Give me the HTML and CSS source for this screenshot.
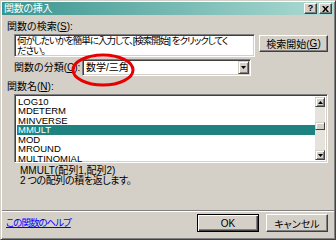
FILE: index.html
```html
<!DOCTYPE html>
<html lang="ja">
<head>
<meta charset="utf-8">
<link rel="stylesheet" href="styles.css">
</head>
<body>
<div class="window">
  <div class="titlebar">
    <span class="title">関数の挿入</span>
    <div class="tbtns">
      <span class="tbtn q">?</span>
      <span class="tbtn x"><svg width="7" height="6" viewBox="0 0 7 6"><path d="M0 0h2l1.5 2L5 0h2L4.5 3 7 6H5L3.5 4 2 6H0l2.5-3z" fill="#000"/></svg></span>
    </div>
  </div>
  <div class="content">
    <div class="label l1">関数の検索(<u>S</u>):</div>
    <div class="search-row">
      <div class="searchbox">何がしたいかを簡単に入力して、[検索開始] をクリックしてく<br>ださい。</div>
      <div class="btn search-btn">検索開始(<u>G</u>)</div>
    </div>
    <div class="cat-row">
      <span class="label">関数の分類(<u>C</u>):</span>
      <div class="combo">
        <span class="combo-text">数学/三角</span>
        <span class="drop"><svg width="5" height="3" viewBox="0 0 5 3"><path d="M0 0h5L2.5 3z" fill="#000"/></svg></span>
      </div>
    </div>
    <div class="label l3">関数名(<u>N</u>):</div>
    <div class="listbox">
      <ul class="items">
        <li>LOG10</li>
        <li>MDETERM</li>
        <li>MINVERSE</li>
        <li class="sel">MMULT</li>
        <li>MOD</li>
        <li>MROUND</li>
        <li>MULTINOMIAL</li>
      </ul>
      <div class="scrollbar">
        <span class="sbtn"><svg width="5" height="3" viewBox="0 0 5 3"><path d="M0 3h5L2.5 0z" fill="#000"/></svg></span>
        <div class="track"><span class="thumb"></span></div>
        <span class="sbtn"><svg width="5" height="3" viewBox="0 0 5 3"><path d="M0 0h5L2.5 3z" fill="#000"/></svg></span>
      </div>
    </div>
    <div class="desc">
      <div>MMULT(配列1,配列2)</div>
      <div class="desc2">2 つの配列の積を返します。</div>
    </div>
  </div>
  <div class="sep"></div>
  <div class="bottom">
    <a class="help">この関数のヘルプ</a>
    <div class="btns">
      <div class="btn ok">OK</div>
      <div class="btn cancel">キャンセル</div>
    </div>
  </div>
  <svg class="annot" width="70" height="40" viewBox="0 0 70 40"><ellipse cx="34" cy="19" rx="30" ry="15" fill="none" stroke="#e80000" stroke-width="3"/></svg>
</div>
</body>
</html>
```
FILE: styles.css
```css
* { box-sizing: border-box; }
html, body { margin: 0; padding: 0; }
body {
  width: 336px;
  height: 240px;
  overflow: hidden;
  font-family: "Liberation Sans", "Noto Sans CJK JP", sans-serif;
  font-size: 10px;
  font-feature-settings: "palt";
  color: #000;
}
u { text-decoration: underline; text-underline-offset: 1px; }

.window {
  position: relative;
  width: 336px;
  height: 240px;
  background: #d4d0c8;
  border: 1px solid;
  border-color: #d4d0c8 #404040 #404040 #d4d0c8;
  box-shadow: inset 1px 1px #fff, inset -1px -1px #808080;
  padding: 1px;
  display: flex;
  flex-direction: column;
}

.titlebar {
  height: 13px;
  background: linear-gradient(to right, #3a958f, #aedcd4);
  display: flex;
  align-items: center;
  justify-content: space-between;
  padding: 0 2px 0 2px;
}
.title { color: #fff; line-height: 12px; letter-spacing: -0.3px; }
.tbtns { display: flex; gap: 1px; }
.tbtn {
  width: 13px;
  height: 11px;
  background: #d4d0c8;
  border: 1px solid;
  border-color: #fff #404040 #404040 #fff;
  box-shadow: inset -1px -1px #808080;
  display: flex;
  align-items: center;
  justify-content: center;
  font-weight: bold;
  font-size: 9px;
  line-height: 9px;
}
.tbtn.x { margin-left: 1px; }

.content {
  padding: 0 6px 0 5px;
}
.label { line-height: 12px; white-space: nowrap; }
.l1 { margin-top: 6px; }

.search-row {
  display: flex;
  align-items: flex-start;
  padding-left: 7px;
  margin-top: 1px;
  gap: 4px;
}
.searchbox {
  width: 241px;
  height: 23px;
  background: #fff;
  border: 1px solid;
  border-color: #808080 #fff #fff #808080;
  box-shadow: inset 1px 1px #404040, inset -1px -1px #d4d0c8;
  padding: 1px 2px;
  font-size: 9.5px;
  letter-spacing: -1px;
  line-height: 10px;
  white-space: nowrap;
  overflow: hidden;
}
.btn {
  background: #d4d0c8;
  border: 1px solid;
  border-color: #fff #404040 #404040 #fff;
  box-shadow: inset -1px -1px #808080;
  display: flex;
  align-items: center;
  justify-content: center;
  white-space: nowrap;
}
.search-btn {
  flex: 1;
  height: 17px;
  margin-top: 1px;
}

.cat-row {
  display: flex;
  align-items: center;
  padding-left: 7px;
  margin-top: 2px;
}
.cat-row .label { width: 68px; }
.combo {
  width: 169px;
  height: 17px;
  background: #fff;
  border: 1px solid;
  border-color: #808080 #fff #fff #808080;
  box-shadow: inset 1px 1px #404040, inset -1px -1px #d4d0c8;
  padding: 2px 2px 2px 3px;
  display: flex;
  align-items: center;
  justify-content: space-between;
}
.combo-text { line-height: 12px; }
.drop {
  width: 11px;
  height: 13px;
  margin-right: -1px;
  background: #d4d0c8;
  border: 1px solid;
  border-color: #d4d0c8 #404040 #404040 #d4d0c8;
  box-shadow: inset 1px 1px #fff, inset -1px -1px #808080;
  display: flex;
  align-items: center;
  justify-content: center;
}

.l3 { margin-top: 5px; }

.listbox {
  margin: 1px 0 0 7px;
  height: 69px;
  background: #fff;
  border: 1px solid;
  border-color: #808080 #fff #fff #808080;
  box-shadow: inset 1px 1px #404040, inset -1px -1px #d4d0c8;
  padding: 2px 2px 2px 2px;
  display: flex;
}
.items {
  list-style: none;
  margin: 0;
  padding: 0;
  flex: 1;
  font-size: 9.5px;
}
.items li {
  height: 9.43px;
  line-height: 9.43px;
  padding-left: 1px;
}
.items li.sel { background: #1e8380; color: #fff; }
.scrollbar {
  width: 10px;
  display: flex;
  flex-direction: column;
  background: #e6e3dc;
}
.sbtn {
  height: 10px;
  background: #d4d0c8;
  border: 1px solid;
  border-color: #d4d0c8 #404040 #404040 #d4d0c8;
  box-shadow: inset 1px 1px #fff, inset -1px -1px #808080;
  display: flex;
  align-items: center;
  justify-content: center;
}
.track { flex: 1; position: relative; }
.thumb {
  position: absolute;
  left: 0;
  right: 0;
  top: 15px;
  height: 8px;
  background: #d4d0c8;
  border: 1px solid;
  border-color: #d4d0c8 #404040 #404040 #d4d0c8;
  box-shadow: inset 1px 1px #fff;
}

.desc {
  margin: 3px 0 0 13px;
  line-height: 10px;
}
.desc2 { letter-spacing: -0.4px; }

.sep {
  margin: 24px 0 0 0;
  height: 2px;
  border-top: 1px solid #808080;
  border-bottom: 1px solid #fff;
}

.bottom {
  display: flex;
  align-items: center;
  justify-content: space-between;
  padding: 0 6px 0 4px;
  margin-top: 2px;
}
.help {
  color: #0000ff;
  text-decoration: underline;
  font-size: 9.5px;
  letter-spacing: -1px;
  line-height: 12px;
}
.btns { display: flex; gap: 7px; }
.btns .btn { width: 62px; height: 18px; }
.btn.ok {
  border: 1px solid #000;
  box-shadow: inset 1px 1px #fff, inset -1px -1px #404040, inset -2px -2px #808080;
}

.annot {
  position: absolute;
  left: 68px;
  top: 50px;
  pointer-events: none;
}
```
